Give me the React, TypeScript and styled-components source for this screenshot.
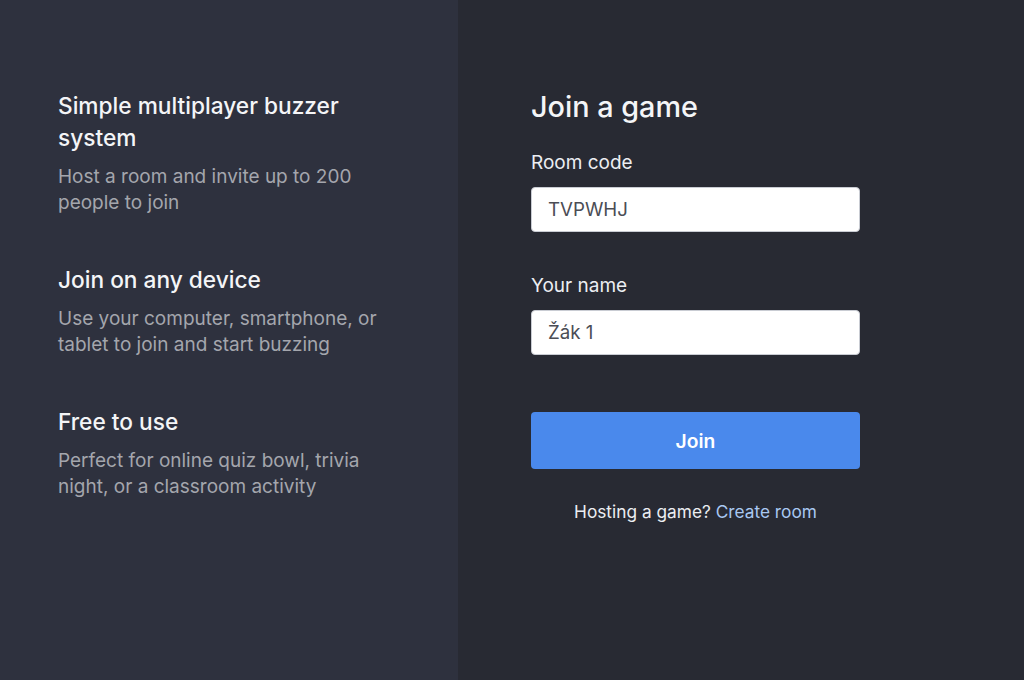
import styled, { createGlobalStyle } from "styled-components";

const GlobalStyle = createGlobalStyle`
  html, body {
    margin: 0;
    padding: 0;
    background: #282a33;
  }
  body {
    font-family: Inter, "Noto Sans", sans-serif;
  }
`;

const Page = styled.div`
  display: flex;
  width: 100%;
  height: 680px;
  overflow: hidden;
`;

const InfoPanel = styled.section`
  width: 458px;
  flex-shrink: 0;
  background: #2e313e;
  padding: 90px 0 0 58px;
  box-sizing: border-box;
  display: flex;
  flex-direction: column;
  gap: 48px;
`;

const Feature = styled.div`
  width: 335px;
  display: flex;
  flex-direction: column;
  gap: 10px;
`;

const FeatureTitle = styled.h2`
  margin: 0;
  font-size: 22.7px;
  line-height: 32px;
  font-weight: 500;
  color: #f4f5f7;
`;

const FeatureText = styled.p`
  margin: 0;
  font-size: 19px;
  line-height: 26px;
  font-weight: 400;
  color: #a4a6ad;
`;

const FormPanel = styled.section`
  flex: 1;
  background: #282a33;
  padding: 89px 0 0 73px;
  box-sizing: border-box;
`;

const Form = styled.form`
  width: 329px;
  display: flex;
  flex-direction: column;
`;

const Title = styled.h1`
  margin: 0 0 25px;
  font-size: 28.8px;
  line-height: 36px;
  font-weight: 500;
  color: #f4f5f7;
`;

const Label = styled.label<{ $top?: number }>`
  margin-top: ${(p) => p.$top ?? 0}px;
  font-size: 19px;
  line-height: 26px;
  color: #eceef2;
`;

const Input = styled.input`
  margin-top: 11px;
  height: 45px;
  box-sizing: border-box;
  border: 1px solid #c9ccd3;
  border-radius: 4px;
  background: #ffffff;
  padding: 0 16px;
  font-family: inherit;
  font-size: 18.7px;
  color: #4b4d55;
  outline: none;
`;

const JoinButton = styled.button`
  margin-top: 57px;
  height: 57px;
  border: none;
  border-radius: 4px;
  background: #4a89ec;
  color: #ffffff;
  font-family: inherit;
  font-size: 19.3px;
  font-weight: 600;
  cursor: pointer;
`;

const HostLine = styled.p`
  margin: 31px 0 0;
  text-align: center;
  font-size: 17.3px;
  line-height: 24px;
  color: #eceef2;
`;

const Link = styled.a`
  color: #a9c8f2;
  text-decoration: none;
`;

const features = [
  {
    title: "Simple multiplayer buzzer system",
    text: "Host a room and invite up to 200 people to join",
  },
  {
    title: "Join on any device",
    text: "Use your computer, smartphone, or tablet to join and start buzzing",
  },
  {
    title: "Free to use",
    text: "Perfect for online quiz bowl, trivia night, or a classroom activity",
  },
];

function App() {
  return (
    <>
      <GlobalStyle />
      <Page>
        <InfoPanel>
          {features.map((f) => (
            <Feature key={f.title}>
              <FeatureTitle>{f.title}</FeatureTitle>
              <FeatureText>{f.text}</FeatureText>
            </Feature>
          ))}
        </InfoPanel>
        <FormPanel>
          <Form onSubmit={(e) => e.preventDefault()}>
            <Title>Join a game</Title>
            <Label htmlFor="code">Room code</Label>
            <Input id="code" defaultValue="TVPWHJ" />
            <Label htmlFor="name" $top={41}>
              Your name
            </Label>
            <Input id="name" defaultValue="Žák 1" />
            <JoinButton type="submit">Join</JoinButton>
            <HostLine>
              Hosting a game? <Link href="#">Create room</Link>
            </HostLine>
          </Form>
        </FormPanel>
      </Page>
    </>
  );
}

export default App;
